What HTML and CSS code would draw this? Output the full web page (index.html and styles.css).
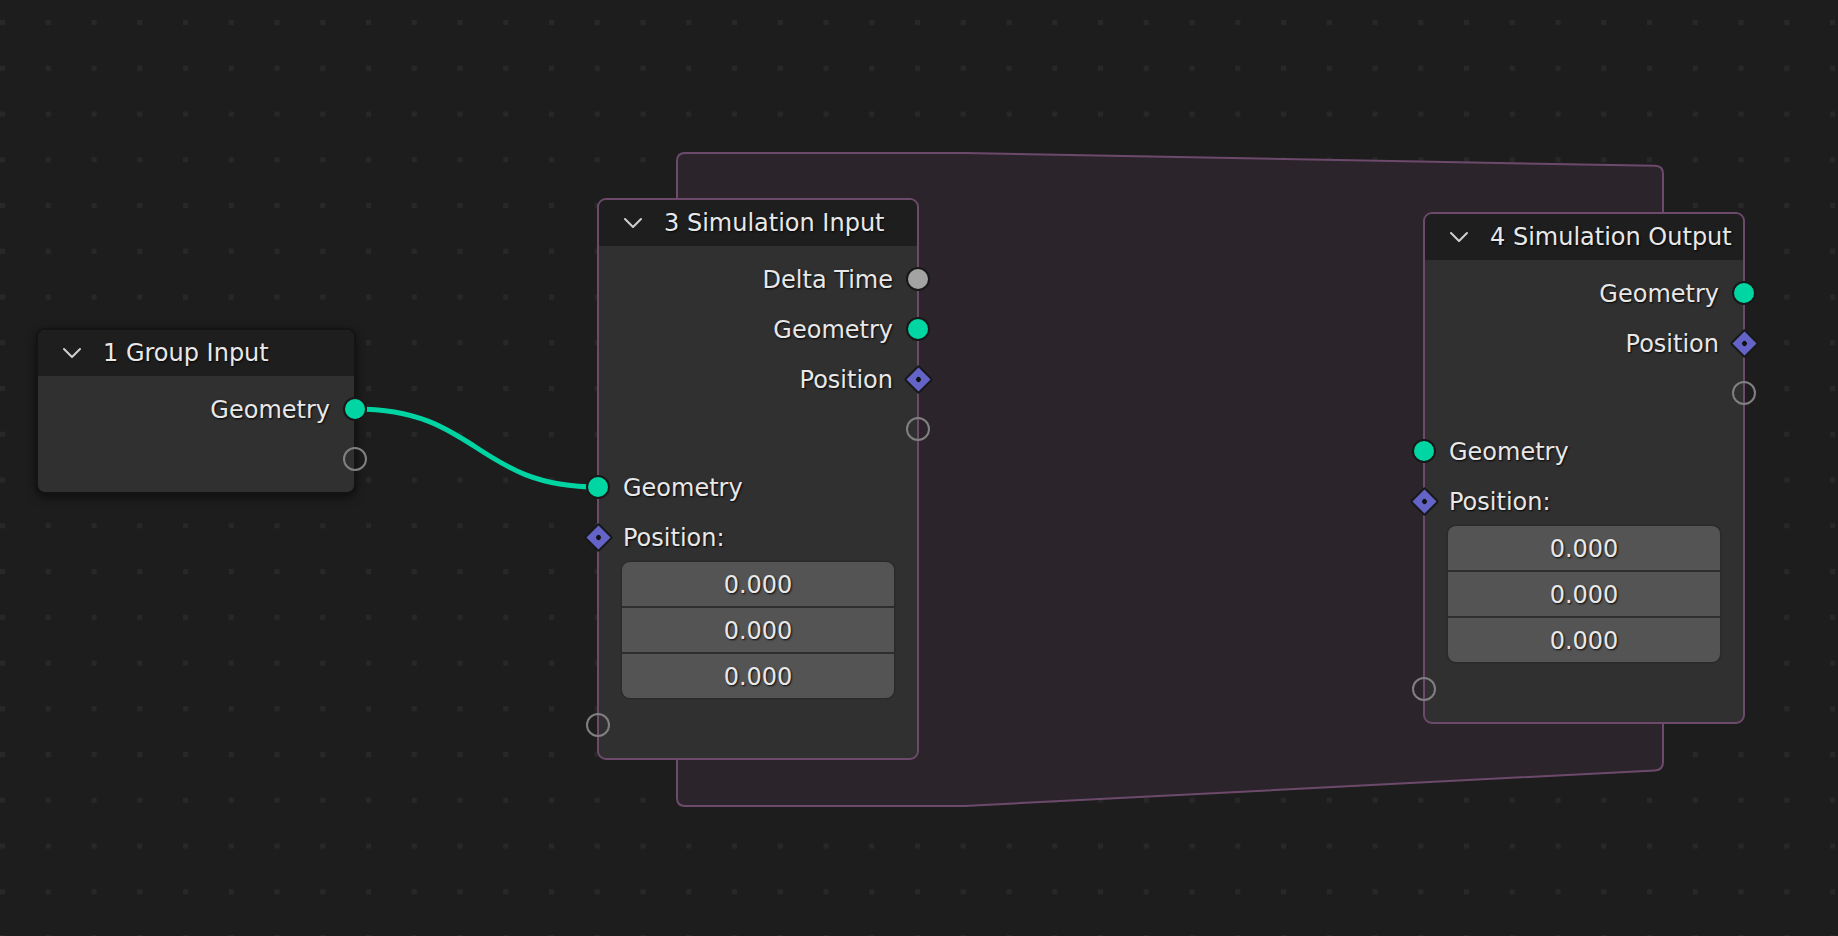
FILE: index.html
```html
<!DOCTYPE html>
<html lang="en">
<head>
<meta charset="utf-8">
<title>Node Editor</title>
<link rel="stylesheet" href="styles.css">
</head>
<body>
<div class="canvas">
  <svg class="backdrop" width="1838" height="936" viewBox="0 0 1838 936">
    <defs>
      <pattern id="dots" x="0" y="20" width="45.75" height="45.75" patternUnits="userSpaceOnUse">
        <rect x="0" y="0" width="5" height="5" fill="#282828"/>
      </pattern>
    </defs>
    <rect width="1838" height="936" fill="#1d1d1d"/>
    <rect width="1838" height="936" fill="url(#dots)"/>
    <path class="zone" d="M677 161 Q677 153 685 153 L965 153 L1655 165.85 Q1663 166 1663 174 L1663 762 Q1663 770 1655 770.4 L965 806 L685 806 Q677 806 677 798 Z"/>
    <path class="link" d="M356 409 C478 409 476 487 598 487"/>
  </svg>

  <div class="node node-group">
    <div class="node-header">
      <svg class="chevron" width="20" height="12" viewBox="0 0 20 12"><polyline points="2,2 10,10 18,2"/></svg>
      <span class="title">1 Group Input</span>
    </div>
    <div class="node-body">
      <div class="row out"><span class="label">Geometry</span><span class="socket geo"></span></div>
      <div class="row out"><span class="socket empty"></span></div>
    </div>
  </div>

  <div class="node node-sim node-sim-in">
    <div class="node-header">
      <svg class="chevron" width="20" height="12" viewBox="0 0 20 12"><polyline points="2,2 10,10 18,2"/></svg>
      <span class="title">3 Simulation Input</span>
    </div>
    <div class="node-body">
      <div class="row out"><span class="label">Delta Time</span><span class="socket float"></span></div>
      <div class="row out"><span class="label">Geometry</span><span class="socket geo"></span></div>
      <div class="row out"><span class="label">Position</span><span class="socket vec"></span></div>
      <div class="row out"><span class="socket empty"></span></div>
      <div class="row in first-in"><span class="socket geo"></span><span class="label">Geometry</span></div>
      <div class="row in"><span class="socket vec"></span><span class="label">Position:</span></div>
      <div class="vector">
        <div class="field">0.000</div>
        <div class="field">0.000</div>
        <div class="field">0.000</div>
      </div>
      <div class="row in after-vec"><span class="socket empty"></span></div>
    </div>
  </div>

  <div class="node node-sim node-sim-out">
    <div class="node-header">
      <svg class="chevron" width="20" height="12" viewBox="0 0 20 12"><polyline points="2,2 10,10 18,2"/></svg>
      <span class="title">4 Simulation Output</span>
    </div>
    <div class="node-body">
      <div class="row out"><span class="label">Geometry</span><span class="socket geo"></span></div>
      <div class="row out"><span class="label">Position</span><span class="socket vec"></span></div>
      <div class="row out"><span class="socket empty"></span></div>
      <div class="row in first-in"><span class="socket geo"></span><span class="label">Geometry</span></div>
      <div class="row in"><span class="socket vec"></span><span class="label">Position:</span></div>
      <div class="vector">
        <div class="field">0.000</div>
        <div class="field">0.000</div>
        <div class="field">0.000</div>
      </div>
      <div class="row in after-vec"><span class="socket empty"></span></div>
    </div>
  </div>
</div>
</body>
</html>
```
FILE: styles.css
```css
html, body {
  margin: 0;
  padding: 0;
  background: #1d1d1d;
}

.canvas {
  position: relative;
  width: 1838px;
  height: 936px;
  overflow: hidden;
  font-family: "DejaVu Sans", "Liberation Sans", sans-serif;
  font-size: 24px;
  color: #e8e8e8;
}

.backdrop {
  position: absolute;
  left: 0;
  top: 0;
}

.zone {
  fill: #2b242b;
  stroke: #6d4a6c;
  stroke-width: 2;
}

.link {
  fill: none;
  stroke: #00d4a2;
  stroke-width: 5;
  stroke-linecap: round;
}

.node {
  position: absolute;
  box-sizing: border-box;
  border: 2px solid #141414;
  border-radius: 9px;
  background: #303030;
}

.node-group {
  left: 36px;
  top: 328px;
  width: 320px;
  box-shadow: 0 3px 10px rgba(0, 0, 0, 0.55);
}

.node-sim {
  border-color: #6d4a6c;
}

.node-sim-in {
  left: 597px;
  top: 198px;
  width: 322px;
}

.node-sim-out {
  left: 1423px;
  top: 212px;
  width: 322px;
}

.node-header {
  height: 46px;
  display: flex;
  align-items: center;
  padding-left: 24px;
  background: #1e1e1e;
  border-radius: 7px 7px 0 0;
}

.chevron {
  flex: none;
  margin-right: 21px;
}

.chevron polyline {
  fill: none;
  stroke: #d0d0d0;
  stroke-width: 2;
  stroke-linecap: round;
  stroke-linejoin: round;
}

.title,
.label,
.field {
  text-shadow: 1px 1px 2px rgba(0, 0, 0, 0.9);
  white-space: nowrap;
}

.node-body {
  padding: 8px 0 8px 0;
  display: flex;
  flex-direction: column;
}

.row {
  position: relative;
  height: 50px;
  display: flex;
  align-items: center;
  padding: 0 24px;
}

.row.out {
  justify-content: flex-end;
}

.row.in {
  justify-content: flex-start;
}

.row.first-in {
  margin-top: 8px;
}

.row.after-vec {
  margin-top: 2px;
}

.label {
  padding-top: 2px;
}

.socket {
  position: absolute;
  top: 50%;
  width: 24px;
  height: 24px;
  margin-top: -12px;
  box-sizing: border-box;
  border-radius: 50%;
  border: 2px solid #181818;
}

.row.out .socket {
  right: -13px;
}

.row.in .socket {
  left: -13px;
}

.socket.geo {
  background: #00d6a3;
}

.socket.float {
  background: #a3a3a3;
}

.socket.empty {
  border: 2.5px solid #808080;
  background: transparent;
}

.socket.vec {
  width: 21px;
  height: 21px;
  margin-top: -10.5px;
  border-radius: 2px;
  background: #6464c8;
  transform: rotate(45deg);
}

.row.out .socket.vec {
  right: -11.5px;
}

.row.in .socket.vec {
  left: -11.5px;
}

.socket.vec::after {
  content: "";
  position: absolute;
  left: 50%;
  top: 50%;
  width: 5px;
  height: 5px;
  margin: -2.5px 0 0 -2.5px;
  border-radius: 50%;
  background: #111111;
}

.vector {
  margin: 0 23px;
  display: flex;
  flex-direction: column;
  gap: 2px;
  background: #2e2e2e;
  border-radius: 8px;
  overflow: hidden;
  box-shadow: 0 0 0 1.5px #2a2a2a;
}

.field {
  height: 44px;
  display: flex;
  align-items: center;
  justify-content: center;
  background: #545454;
  padding-top: 2px;
  box-sizing: border-box;
}
```
